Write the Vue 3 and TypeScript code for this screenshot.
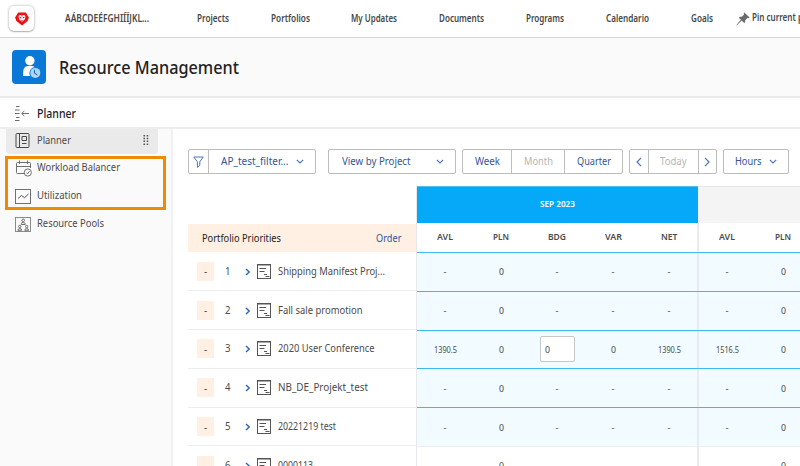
<script setup lang="ts">
import type { Directive } from 'vue'

interface Label {
  text: string
  width: number
}

interface Project extends Label {
  rank: number
  values: string[]
  editable?: boolean
}

// Condenses a label horizontally so that it takes exactly the given width.
const vFit: Directive<HTMLElement, number> = {
  mounted(el, { value }) {
    const natural = el.getBoundingClientRect().width
    if (!natural) return
    el.style.transform = `scaleX(${value / natural})`
    el.style.marginRight = `${value - natural}px`
  },
}

const navItems: Label[] = [
  { text: 'AÁBCDEÉFGHIÍÏJKL...', width: 84 },
  { text: 'Projects', width: 32 },
  { text: 'Portfolios', width: 39 },
  { text: 'My Updates', width: 46 },
  { text: 'Documents', width: 45 },
  { text: 'Programs', width: 38 },
  { text: 'Calendario', width: 43 },
  { text: 'Goals', width: 22 },
]

const sections: (Label & { icon: string })[] = [
  { text: 'Planner', width: 34, icon: 'planner' },
  { text: 'Workload Balancer', width: 83, icon: 'workload' },
  { text: 'Utilization', width: 45, icon: 'utilization' },
  { text: 'Resource Pools', width: 67, icon: 'pools' },
]

const columns: Label[] = [
  { text: 'AVL', width: 16 },
  { text: 'PLN', width: 16 },
  { text: 'BDG', width: 18 },
  { text: 'VAR', width: 17 },
  { text: 'NET', width: 16.5 },
]

const months = [
  { name: 'SEP 2023', current: true, columns },
  { name: '', current: false, columns },
]

const empty = ['-', '0', '-', '-', '-', '-', '0', '-', '-', '-']

const projects: Project[] = [
  { rank: 1, text: 'Shipping Manifest Proj...', width: 107, values: empty },
  { rank: 2, text: 'Fall sale promotion', width: 84.5, values: empty },
  {
    rank: 3,
    text: '2020 User Conference',
    width: 96.5,
    values: ['1390.5', '0', '0', '0', '1390.5', '1516.5', '0', '0', '0', '1516.5'],
    editable: true,
  },
  { rank: 4, text: 'NB_DE_Projekt_test', width: 90, values: empty },
  { rank: 5, text: '20221219 test', width: 58, values: empty },
  { rank: 6, text: '0000113', width: 35, values: empty },
]

const valueWidth = (v: string) => (v.length > 1 ? 23 : v === '-' ? 3 : 5)
</script>

<template>
  <div class="page">
    <header class="topnav">
      <div class="brand">
        <svg width="14" height="14" viewBox="0 0 14 14">
          <path d="M3.2.5h7.6L13.9 5.6 12.6 9 7 13.6 1.4 9 .1 5.600z" fill="#ee1111" />
          <path d="M3.8 3.4 5.400 2.900 7 3.400l1.600-.5 1.600.5.2 2-.9 2.400-1 .8L7 9.700 5.500 8.600l-1-.8-.9-2.400z" fill="#fff" />
          <path d="M4.300 4.800 6.300 5.300 6.100 6.500 4.800 6zM9.700 4.800 7.700 5.300 7.900 6.500 9.200 6zM5.800 7.900h2.400L7 8.900zM6.700 3h.6v1.800h-.6z" fill="#ee1111" />
        </svg>
      </div>
      <nav class="links">
        <a v-for="item in navItems" :key="item.text"><span v-fit="item.width" class="t">{{ item.text }}</span></a>
      </nav>
      <div class="pin">
        <svg width="14" height="14" viewBox="0 0 14 14">
          <path d="M8.3.4 13.6 5.6 12.3 6.2 11.5 5.9 9.2 8.2 9.2 10.3 8.2 11 5.7 8.6.6 13.6.2 13.2 4.9 7.8 2.9 5.8 3.7 4.8 5.8 4.8 8.1 2.5 7.7 1.5z" fill="#6b6b6b" />
        </svg>
        <span v-fit="65.5" class="t">Pin current page</span>
      </div>
    </header>

    <div class="heading">
      <div class="app-icon">
        <svg width="34" height="34" viewBox="0 0 34 34">
          <circle cx="17.9" cy="10.8" r="4.7" fill="#fff" />
          <path d="M11.2 26v-4c0-3.600 1.800-5.600 4.600-5.900h4.200c2.800.3 4.600 2.300 4.600 5.900v4z" fill="#fff" />
          <circle cx="23.3" cy="22.9" r="5.9" fill="#0a78d6" />
          <circle cx="23.3" cy="22.9" r="5" fill="#b3d4f3" />
          <path d="M22.4 19.9v3.200l3 1.900" fill="none" stroke="#0a62b4" stroke-width="1" />
        </svg>
      </div>
      <h1><span v-fit="180" class="t">Resource Management</span></h1>
    </div>

    <div class="subheading">
      <svg width="15" height="15" viewBox="0 0 15 15" fill="none" stroke="#6e6e6e">
        <path d="M1 .5h3.500M1 11.500h3.500M0 4h4.500M0 7.500h4.500M0 14.500h4.500" stroke-width="1" />
        <path d="M14 7.500H6.800M9.300 5 6.700 7.500l2.600 2.500" />
      </svg>
      <h2><span v-fit="39" class="t">Planner</span></h2>
    </div>

    <div class="body">
      <aside class="sidebar">
        <div v-for="(s, i) in sections" :key="s.text" class="section" :class="{ active: i === 0 }">
          <svg class="section-icon" width="17" height="17" viewBox="0 0 17 17" fill="none" stroke="#707070">
            <template v-if="s.icon === 'planner'">
              <rect x="1" y="1.5" width="13" height="14" rx="1" stroke="#484848" />
              <path d="M4.500 1.500v14M7 4.500h4.500v4H7zM7 11.500h4.500" stroke="#484848" />
            </template>
            <template v-else-if="s.icon === 'workload'">
              <path d="M9 13.500H2.500a1 1 0 0 1-1-1V3.500a1 1 0 0 1 1-1h12a1 1 0 0 1 1 1V8M1.500 6.500h14M4.500.5v3.500M12.500.5v3.500" />
              <circle cx="12.8" cy="12.5" r="3.6" />
              <path d="m11.300 12.600 1.200 1.200 2-2.500" />
            </template>
            <template v-else-if="s.icon === 'utilization'">
              <rect x=".5" y="1.5" width="15" height="14" />
              <path d="m3 10.500 3.500-3 3 2.200L13.500 6" stroke="#555" />
            </template>
            <template v-else>
              <rect x=".5" y="1.5" width="15" height="14" stroke="#8b8b8b" />
              <circle cx="8.200" cy="4.300" r="1.300" />
              <path d="M6.200 8.500V7.800Q6.200 6.500 8.200 6.500t2 1.300v.7z" />
              <circle cx="4.800" cy="10.500" r="1.200" />
              <path d="M2.900 14.300Q2.900 12.500 4.800 12.500t1.900 1.800z" />
              <circle cx="11.700" cy="10.500" r="1.200" />
              <path d="M9.800 14.300q0-1.800 1.900-1.800t1.900 1.800z" />
            </template>
          </svg>
          <span v-fit="s.width" class="t">{{ s.text }}</span>
          <svg v-if="i === 0" class="grip" width="6" height="10" viewBox="0 0 6 10" fill="#505050">
            <path d="M.5 0h1.500v1.500H.5zM3.700 0h1.500v1.500H3.700zM.5 2.800h1.500v1.500H.5zM3.700 2.800h1.500v1.500H3.700zM.5 5.600h1.500v1.500H.5zM3.700 5.600h1.500v1.500H3.700zM.5 8.400h1.500v1.500H.5zM3.700 8.400h1.500v1.500H3.700z" />
          </svg>
        </div>
        <div class="highlight"></div>
      </aside>

      <main class="content">
        <div class="toolbar">
          <div class="group filter">
            <span class="seg funnel">
              <svg width="11" height="12" viewBox="0 0 11 12" fill="none" stroke="#4c74b8">
                <path d="M.8 1h9.400L6.800 5.800v3.400L4.400 11.300V5.800z" />
              </svg>
            </span>
            <span class="seg grow">
              <span v-fit="67.5" class="t">AP_test_filter...</span>
              <svg class="chev" width="8" height="5" viewBox="0 0 8 5"><path d="M.8.8 4 4 7.200.8" /></svg>
            </span>
          </div>
          <div class="group view">
            <span class="seg grow spread">
              <span v-fit="68.5" class="t">View by Project</span>
              <svg class="chev" width="8" height="5" viewBox="0 0 8 5"><path d="M.8.8 4 4 7.200.8" /></svg>
            </span>
          </div>
          <div class="group scale">
            <span class="seg week"><span v-fit="25" class="t">Week</span></span>
            <span class="seg month muted"><span v-fit="29" class="t">Month</span></span>
            <span class="seg grow"><span v-fit="34" class="t">Quarter</span></span>
          </div>
          <div class="group period">
            <span class="seg arrow"><svg class="chev" width="6" height="10" viewBox="0 0 6 10"><path d="M5 .8 1 5l4 4.200" /></svg></span>
            <span class="seg today muted"><span v-fit="26.5" class="t">Today</span></span>
            <span class="seg grow"><svg class="chev" width="6" height="10" viewBox="0 0 6 10"><path d="m1 .8 4 4.200-4 4.200" /></svg></span>
          </div>
          <div class="group hours">
            <span class="seg grow">
              <span v-fit="26.5" class="t">Hours</span>
              <svg class="chev" width="8" height="5" viewBox="0 0 8 5"><path d="M.8.8 4 4 7.200.8" /></svg>
            </span>
          </div>
        </div>

        <div class="planner">
          <div class="names">
            <div class="names-head">
              <span v-fit="79" class="t">Portfolio Priorities</span>
              <a><span v-fit="25.5" class="t">Order</span></a>
            </div>
            <div v-for="p in projects" :key="p.rank" class="name-row">
              <span class="score">-</span>
              <span class="rank"><span v-fit="5.5" class="t">{{ p.rank }}</span></span>
              <svg class="expand" width="6" height="8" viewBox="0 0 6 8"><path d="m1 .9 3.200 3.100L1 7.100" /></svg>
              <svg class="doc" width="15" height="15" viewBox="0 0 15 15" fill="none" stroke="#555">
                <rect x=".5" y=".5" width="13" height="14" />
                <path d="M0 1h14M2.500 4.500h6.500M2.500 7.500h5M7 10.500h3M8.500 12.500h4" />
              </svg>
              <span v-fit="p.width" class="t label">{{ p.text }}</span>
            </div>
          </div>

          <div class="grid">
            <div class="month-row">
              <div v-for="(m, i) in months" :key="i" class="month-head" :class="{ current: m.current }">
                <span v-if="m.name" v-fit="35" class="t">{{ m.name }}</span>
              </div>
            </div>
            <div class="col-row">
              <div v-for="(m, i) in months" :key="i" class="cells">
                <div v-for="c in m.columns" :key="c.text" class="cell"><span v-fit="c.width" class="t">{{ c.text }}</span></div>
              </div>
            </div>
            <div v-for="p in projects" :key="p.rank" class="value-row">
              <div v-for="(m, i) in months" :key="i" class="cells">
                <div v-for="(v, j) in p.values.slice(i * 5, i * 5 + 5)" :key="j" class="cell">
                  <span v-if="p.editable && i === 0 && j === 2" class="field"><span v-fit="5" class="t">{{ v }}</span></span>
                  <span v-else v-fit="valueWidth(v)" class="t">{{ v }}</span>
                </div>
              </div>
            </div>
          </div>
        </div>
      </main>
    </div>
  </div>
</template>

<style>
html,
body {
  overflow: hidden;
}
</style>

<style scoped>
.page {
  width: 800px;
  height: 466px;
  overflow: hidden;
  display: flex;
  flex-direction: column;
  background: #fff;
  color: #4b4b4b;
  font-family: 'Noto Sans', 'Open Sans', sans-serif;
  font-size: 11px;
}

.page * {
  box-sizing: border-box;
}

.t {
  display: inline-block;
  white-space: nowrap;
  transform-origin: 0 50%;
  flex: none;
}

svg {
  display: block;
  flex: none;
}

.topnav {
  height: 38px;
  flex: none;
  display: flex;
  align-items: center;
  padding: 0 0 0 9px;
  border-bottom: 1px solid #d5d5d5;
  font-size: 9.8px;
  font-weight: 600;
  color: #484848;
}

.brand {
  width: 25px;
  height: 25px;
  flex: none;
  display: grid;
  place-items: center;
  border-radius: 5px;
  box-shadow: 0 0 2px 1px rgba(0, 0, 0, 0.16), 0 1px 1px rgba(0, 0, 0, 0.18);
}

.links {
  display: flex;
  gap: 41.8px;
  margin-left: 31px;
  line-height: 14px;
  padding-top: 1px;
}

.links a {
  display: flex;
}

.links a:first-child {
  margin-right: 6px;
}

.pin {
  display: flex;
  align-items: center;
  gap: 2px;
  margin-left: 23.5px;
}

.pin .t {
  margin-top: -2px;
}

.heading {
  height: 60px;
  flex: none;
  display: flex;
  align-items: center;
  gap: 13px;
  padding: 0 12px;
  background: #fafafa;
  border-bottom: 2px solid #ebebeb;
}

.app-icon {
  width: 34px;
  height: 34px;
  border-radius: 4px;
  background: #0a78d6;
}

h1,
h2 {
  margin: 0;
  display: flex;
  color: #222;
  font-weight: 500;
}

h1 {
  font-size: 17.6px;
  line-height: 24px;
}

.subheading {
  height: 31px;
  flex: none;
  display: flex;
  align-items: center;
  gap: 7px;
  padding: 1px 0 0 15px;
  border-bottom: 2px solid #ededed;
}

h2 {
  font-size: 12px;
  line-height: 16px;
  padding-top: 1px;
}

.body {
  flex: 1;
  min-height: 0;
  display: flex;
}

.sidebar {
  position: relative;
  width: 173px;
  flex: none;
  background: #fafafa;
  border-right: 2px solid #f0f0f0;
}

.section {
  height: 28px;
  display: flex;
  align-items: center;
  padding: 0 0 4px 9px;
  margin-left: 6px;
  width: 152px;
  color: #4b4b4b;
}

.section.active {
  height: 25px;
  margin-bottom: 2px;
  padding-bottom: 2px;
  background: #eaeaea;
  border-radius: 0 0 4px 4px;
}

.section .t {
  margin-top: -3px;
}

.section-icon {
  margin-right: 5px;
  margin-top: 1px;
}

.section.active .section-icon {
  margin-top: 0;
}

.grip {
  margin-left: auto;
  margin-right: 9px;
  margin-top: -2px;
}

.highlight {
  position: absolute;
  left: 5px;
  top: 27px;
  width: 161px;
  height: 54px;
  border: 3px solid #ee8b05;
}

.content {
  flex: 1;
  min-width: 0;
  padding: 20px 0 0 15px;
}

.toolbar {
  display: flex;
  height: 25px;
  color: #34549c;
  font-size: 11px;
}

.group {
  display: flex;
  border: 1px solid #bdbdbd;
  border-radius: 2px;
}

.seg {
  display: flex;
  align-items: center;
  justify-content: center;
}

.seg + .seg {
  border-left: 1px solid #bdbdbd;
}

.seg .t {
  margin-top: -2px;
}

.grow {
  flex: 1;
}

.muted {
  color: #b5b5b5;
}

.filter {
  width: 128px;
  margin-right: 12px;
}

.funnel {
  width: 19px;
}

.filter .grow,
.hours .grow {
  gap: 7.5px;
}

.view {
  width: 128px;
  margin-right: 6px;
}

.spread {
  justify-content: space-between;
  padding: 0 11px 0 12.5px;
}

.scale {
  width: 161px;
  margin-right: 6px;
}

.week {
  width: 48px;
}

.month {
  width: 53px;
}

.period {
  width: 88px;
  margin-right: 6px;
}

.arrow {
  width: 17.5px;
}

.today {
  width: 50px;
}

.hours {
  width: 66px;
}

.chev {
  fill: none;
  stroke: #4c74b8;
  stroke-width: 1.2;
}

.planner {
  display: flex;
  margin-top: 12px;
}

.names {
  width: 228px;
  flex: none;
  padding-top: 38px;
}

.names-head {
  height: 28px;
  margin-bottom: 0.5px;
  display: flex;
  align-items: center;
  justify-content: space-between;
  padding: 0 14.5px 1px 14px;
  background: #fff0e3;
  color: #222;
  font-size: 11px;
}

.names-head a {
  display: flex;
  color: #34549c;
}

.name-row {
  height: 38.8px;
  display: flex;
  align-items: center;
  border-bottom: 1px solid #ededed;
  padding-left: 9px;
}

.score {
  width: 17px;
  height: 19px;
  display: grid;
  place-items: center;
  background: #fff0e3;
  font-size: 10px;
  line-height: 16px;
}

.rank {
  display: flex;
  margin-left: 10.5px;
  margin-top: -1px;
  font-size: 10.5px;
  width: 20px;
}

.expand {
  fill: none;
  stroke: #2d63b5;
  stroke-width: 1.4;
  margin: 1px 0 0 0;
}

.doc {
  margin: 0 5.5px 0 6.5px;
}

.label {
  margin-top: -2px;
}

.grid {
  flex: 1;
  min-width: 0;
  overflow: hidden;
  border-left: 1px solid #e6e8eb;
}

.month-row,
.col-row,
.value-row {
  display: flex;
  width: 564px;
}

.month-head {
  height: 37px;
  display: grid;
  place-content: center;
  background: #f4f4f4;
  border-top: 1px solid #e6e6e6;
  color: #fff;
  font-size: 9px;
  font-weight: 600;
  padding-bottom: 4px;
}

.month-head.current {
  width: 281px;
  background: #05a9f7;
  border-top-color: #4fbdf0;
}

.month-head + .month-head {
  flex: 1;
}

.col-row {
  height: 30px;
  border-bottom: 1px solid #3fbdf3;
  font-size: 9.3px;
  font-weight: 600;
}

.cells {
  width: 282px;
  display: grid;
  grid-template-columns: repeat(5, 1fr);
  border-right: 2px solid #e8ebef;
}

.cell {
  display: flex;
  align-items: center;
  justify-content: center;
}

.col-row .cell {
  padding-bottom: 2px;
}

.value-row {
  height: 38.8px;
  background: #f2fbff;
  border-bottom: 1px solid #3fb8ee;
  font-size: 9.3px;
}

.value-row:nth-child(7) {
  border-bottom-color: #ededed;
}

.value-row:last-child {
  background: #fff;
}

.field {
  width: 35px;
  height: 26px;
  display: flex;
  align-items: center;
  padding-left: 4px;
  background: #fff;
  border: 1px solid #c8c8c8;
  border-radius: 2px;
}
</style>
